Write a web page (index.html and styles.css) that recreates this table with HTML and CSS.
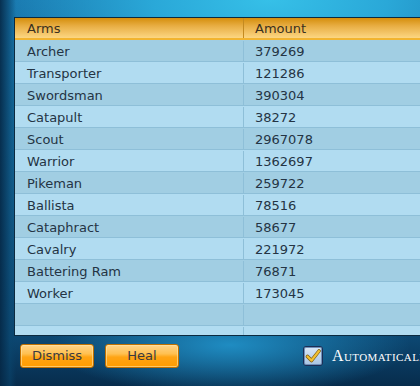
FILE: index.html
```html
<!DOCTYPE html>
<html>
<head>
<meta charset="utf-8">
<link rel="stylesheet" href="styles.css">
</head>
<body>
<div class="panel">
  <div class="grid">
    <div class="row head"><div class="c1">Arms</div><div class="c2">Amount</div><div class="c3"></div></div>
    <div class="row odd"><div class="c1">Archer</div><div class="c2">379269</div><div class="c3"></div></div>
    <div class="row even"><div class="c1">Transporter</div><div class="c2">121286</div><div class="c3"></div></div>
    <div class="row odd"><div class="c1">Swordsman</div><div class="c2">390304</div><div class="c3"></div></div>
    <div class="row even"><div class="c1">Catapult</div><div class="c2">38272</div><div class="c3"></div></div>
    <div class="row odd"><div class="c1">Scout</div><div class="c2">2967078</div><div class="c3"></div></div>
    <div class="row even"><div class="c1">Warrior</div><div class="c2">1362697</div><div class="c3"></div></div>
    <div class="row odd"><div class="c1">Pikeman</div><div class="c2">259722</div><div class="c3"></div></div>
    <div class="row even"><div class="c1">Ballista</div><div class="c2">78516</div><div class="c3"></div></div>
    <div class="row odd"><div class="c1">Cataphract</div><div class="c2">58677</div><div class="c3"></div></div>
    <div class="row even"><div class="c1">Cavalry</div><div class="c2">221972</div><div class="c3"></div></div>
    <div class="row odd"><div class="c1">Battering Ram</div><div class="c2">76871</div><div class="c3"></div></div>
    <div class="row even"><div class="c1">Worker</div><div class="c2">173045</div><div class="c3"></div></div>
    <div class="row odd"><div class="c1"></div><div class="c2"></div><div class="c3"></div></div>
    <div class="row even last"><div class="c1"></div><div class="c2"></div><div class="c3"></div></div>
  </div>
  <div class="actions">
    <button class="btn btn-dismiss">Dismiss</button>
    <button class="btn btn-heal">Heal</button>
    <label class="auto">
      <span class="check">
        <svg width="16" height="16" viewBox="0 0 16 16"><path d="M2.5 8.5 L6.5 12.5 L14 3" fill="none" stroke="#7a5a10" stroke-width="3.6" stroke-linecap="round" stroke-linejoin="round"/><path d="M2.5 8.5 L6.5 12.5 L14 3" fill="none" stroke="#f2c030" stroke-width="2.2" stroke-linecap="round" stroke-linejoin="round"/></svg>
      </span>
      <span class="auto-text">Automatically</span>
    </label>
  </div>
</div>
</body>
</html>
```
FILE: styles.css
```css
html, body {
  margin: 0;
  padding: 0;
  width: 420px;
  height: 386px;
  overflow: hidden;
}
body {
  font-family: "DejaVu Sans", Verdana, sans-serif;
  background:
    linear-gradient(90deg, rgba(5,40,70,0.9) 0px, rgba(10,70,110,0.55) 10px, rgba(20,100,150,0) 16px),
    radial-gradient(ellipse 260px 110px at 270px 0px, #36c0e8 0%, #2aa8d8 45%, rgba(30,130,190,0) 100%),
    radial-gradient(ellipse 180px 50px at 230px 345px, #1f8cc2 0%, rgba(25,110,170,0) 100%),
    linear-gradient(180deg, #1a7ab0 0px, #13608f 200px, #0c4670 340px, #072c4c 386px);
}
.panel {
  padding: 17px 0 0 14px;
}
.grid {
  width: 520px;
  border: 1px solid #0b2a40;
  border-right: none;
  font-size: 13px;
  color: #243444;
}
.row {
  display: flex;
  height: 22px;
  line-height: 21px;
  padding-top: 1px;
  box-sizing: border-box;
  border-bottom: 1px solid #8ebfd8;
}
.row.head {
  height: 22px;
  padding-top: 0;
  border-bottom: 2px solid #f2b430;
  background: linear-gradient(180deg, #d48e0c 0%, #e8ae44 40%, #fcd682 100%);
  color: #3a3020;
  line-height: 21px;
}
.row.odd { background: #a1cee3; }
.row.even { background: #b1dcf1; }
.row.last { height: 9px; border-bottom: none; }
.c1 {
  width: 229px;
  padding-left: 12px;
  box-sizing: border-box;
  border-right: 1px solid #8ebfd8;
}
.c2 {
  width: 200px;
  padding-left: 11px;
  box-sizing: border-box;
  border-right: 1px solid #8ebfd8;
}
.head .c1, .head .c2 { border-right: 1px solid #c48a20; }
.c3 { flex: 1; }
.actions {
  display: flex;
  align-items: center;
  padding: 8px 0 0 6px;
}
.btn {
  flex: none;
  font-family: "DejaVu Sans", Verdana, sans-serif;
  font-size: 13px;
  color: #3a3a40;
  height: 24px;
  width: 74px;
  padding: 0 0 1px;
  border: 1px solid #c07000;
  border-radius: 3px;
  background: linear-gradient(180deg, #ffd48a 0%, #ffc050 40%, #ffa414 55%, #ff9c00 100%);
  box-shadow: inset 0 0 0 1px rgba(255,230,170,0.6);
}
.btn-heal { margin-left: 11px; }
.auto {
  flex: none;
  display: flex;
  align-items: center;
  margin-left: 124px;
}
.check {
  flex: none;
  width: 18px;
  height: 18px;
  border: 1px solid #1b2d55;
  border-radius: 3px;
  background: linear-gradient(180deg, #d9e8f6 0%, #a8c4e2 100%);
  box-shadow: inset 0 0 0 1px #6f8fb8;
  display: flex;
  align-items: center;
  justify-content: center;
}
.auto-text {
  margin-left: 9px;
  font-family: "Liberation Serif", "Times New Roman", serif;
  font-variant: small-caps;
  font-size: 16px;
  color: #ffffff;
  letter-spacing: 0.4px;
  white-space: nowrap;
}
```
